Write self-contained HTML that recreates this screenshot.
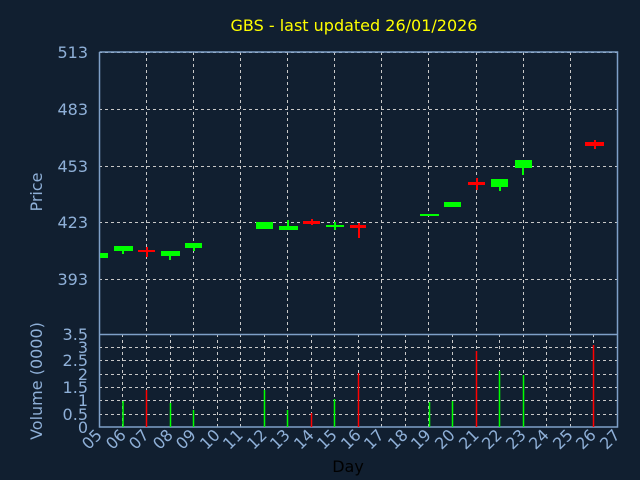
<!DOCTYPE html>
<html><head><meta charset="utf-8"><style>
html,body{margin:0;padding:0;background:#111f30;}
svg{display:block;font-family:"DejaVu Sans","Liberation Sans",sans-serif;}
</style></head><body>
<svg width="640" height="480" viewBox="0 0 640 480" xmlns="http://www.w3.org/2000/svg">
<rect width="640" height="480" fill="#111f30"/>
<text x="354" y="31" fill="#ffff00" font-size="16" text-anchor="middle">GBS - last updated 26/01/2026</text>
<g stroke="#c8c8c8" stroke-width="1" stroke-dasharray="3,3" fill="none">
<path d="M99 52.5H617M99 109.5H617M99 166.5H617M99 222.5H617M99 279.5H617"/>
<path d="M146.5 52V334M193.5 52V334M240.5 52V334M287.5 52V334M334.5 52V334M381.5 52V334M428.5 52V334M476.5 52V334M523.5 52V334M570.5 52V334"/>
<path d="M99 347.5H617M99 360.5H617M99 374.5H617M99 387.5H617M99 400.5H617M99 414.5H617"/>
<path d="M122.5 334V427M146.5 334V427M170.5 334V427M193.5 334V427M217.5 334V427M240.5 334V427M264.5 334V427M287.5 334V427M311.5 334V427M334.5 334V427M358.5 334V427M381.5 334V427M405.5 334V427M428.5 334V427M452.5 334V427M476.5 334V427M499.5 334V427M523.5 334V427M546.5 334V427M570.5 334V427M593.5 334V427"/>
</g>
<g stroke="#7fa0c8" stroke-width="1.5" fill="none">
<path d="M99.5 52V427H617.5V52H99.5M99 334.5H617"/>
</g>
<g fill="#8fb0d8" font-size="16" text-anchor="end">
<text x="88" y="58">513</text><text x="88" y="115">483</text><text x="88" y="172">453</text><text x="88" y="228">423</text><text x="88" y="285">393</text>
<text x="88" y="340">3.5</text><text x="88" y="353">3</text><text x="88" y="366">2.5</text><text x="88" y="380">2</text><text x="88" y="393">1.5</text><text x="88" y="406">1</text><text x="88" y="420">0.5</text><text x="88" y="433">0</text>
</g>
<text transform="translate(42,192) rotate(-90)" fill="#8fb0d8" font-size="16" text-anchor="middle">Price</text>
<text transform="translate(42,381) rotate(-90)" fill="#8fb0d8" font-size="16" text-anchor="middle">Volume (0000)</text>
<text x="348" y="472" fill="#000" font-size="16" text-anchor="middle">Day</text>
<g fill="#8fb0d8" font-size="16" text-anchor="end">
<text transform="translate(103,436) rotate(-45)">05</text>
<text transform="translate(127,436) rotate(-45)">06</text>
<text transform="translate(150,436) rotate(-45)">07</text>
<text transform="translate(174,436) rotate(-45)">08</text>
<text transform="translate(197,436) rotate(-45)">09</text>
<text transform="translate(221,436) rotate(-45)">10</text>
<text transform="translate(244,436) rotate(-45)">11</text>
<text transform="translate(268,436) rotate(-45)">12</text>
<text transform="translate(291,436) rotate(-45)">13</text>
<text transform="translate(315,436) rotate(-45)">14</text>
<text transform="translate(338,436) rotate(-45)">15</text>
<text transform="translate(362,436) rotate(-45)">16</text>
<text transform="translate(385,436) rotate(-45)">17</text>
<text transform="translate(409,436) rotate(-45)">18</text>
<text transform="translate(432,436) rotate(-45)">19</text>
<text transform="translate(456,436) rotate(-45)">20</text>
<text transform="translate(480,436) rotate(-45)">21</text>
<text transform="translate(503,436) rotate(-45)">22</text>
<text transform="translate(527,436) rotate(-45)">23</text>
<text transform="translate(550,436) rotate(-45)">24</text>
<text transform="translate(574,436) rotate(-45)">25</text>
<text transform="translate(597,436) rotate(-45)">26</text>
<text transform="translate(621,436) rotate(-45)">27</text>
</g>
<!-- candles -->
<g fill="#00ff00" stroke="none">
<rect x="100" y="253" width="8" height="5"/>
<rect x="114" y="246" width="19" height="5"/><rect x="122" y="251" width="2" height="3"/>
<rect x="161" y="251" width="19" height="5"/><rect x="169" y="256" width="2" height="4"/>
<rect x="185" y="243" width="17" height="5"/><rect x="193" y="248" width="2" height="3"/>
<rect x="256" y="222" width="17" height="7"/>
<rect x="279" y="226" width="19" height="4"/><rect x="287" y="220" width="2" height="6"/>
<rect x="326" y="225" width="18" height="2"/><rect x="334" y="222" width="2" height="8"/>
<rect x="420" y="214" width="19" height="2"/>
<rect x="444" y="202" width="17" height="5"/>
<rect x="491" y="179" width="17" height="8"/><rect x="499" y="187" width="2" height="4"/>
<rect x="515" y="160" width="17" height="8"/><rect x="522" y="168" width="2" height="7"/>
</g>
<g fill="#ff0000" stroke="none">
<rect x="138" y="250" width="17" height="2"/><rect x="146" y="247" width="2" height="10"/>
<rect x="303" y="221" width="17" height="3"/><rect x="311" y="219" width="2" height="6"/>
<rect x="350" y="225" width="16" height="3"/><rect x="358" y="223" width="2" height="15"/>
<rect x="468" y="182" width="17" height="3"/><rect x="476" y="178" width="2" height="12"/>
<rect x="585" y="142" width="19" height="4"/><rect x="594" y="140" width="2" height="9"/>
</g>
<!-- volume -->
<g stroke-width="1.5">
<path stroke="#00ff00" d="M123 427V401M170.5 427V403M193.5 427V410M264.5 427V390M287.5 427V410M334.5 427V399M429.5 427V402M452.5 427V401M499.5 427V371M523.5 427V375"/>
<path stroke="#ff0000" d="M146.5 427V390M311.5 427V413M358.5 427V373M476.5 427V351M593.5 427V345"/>
</g>
</svg>
</body></html>
